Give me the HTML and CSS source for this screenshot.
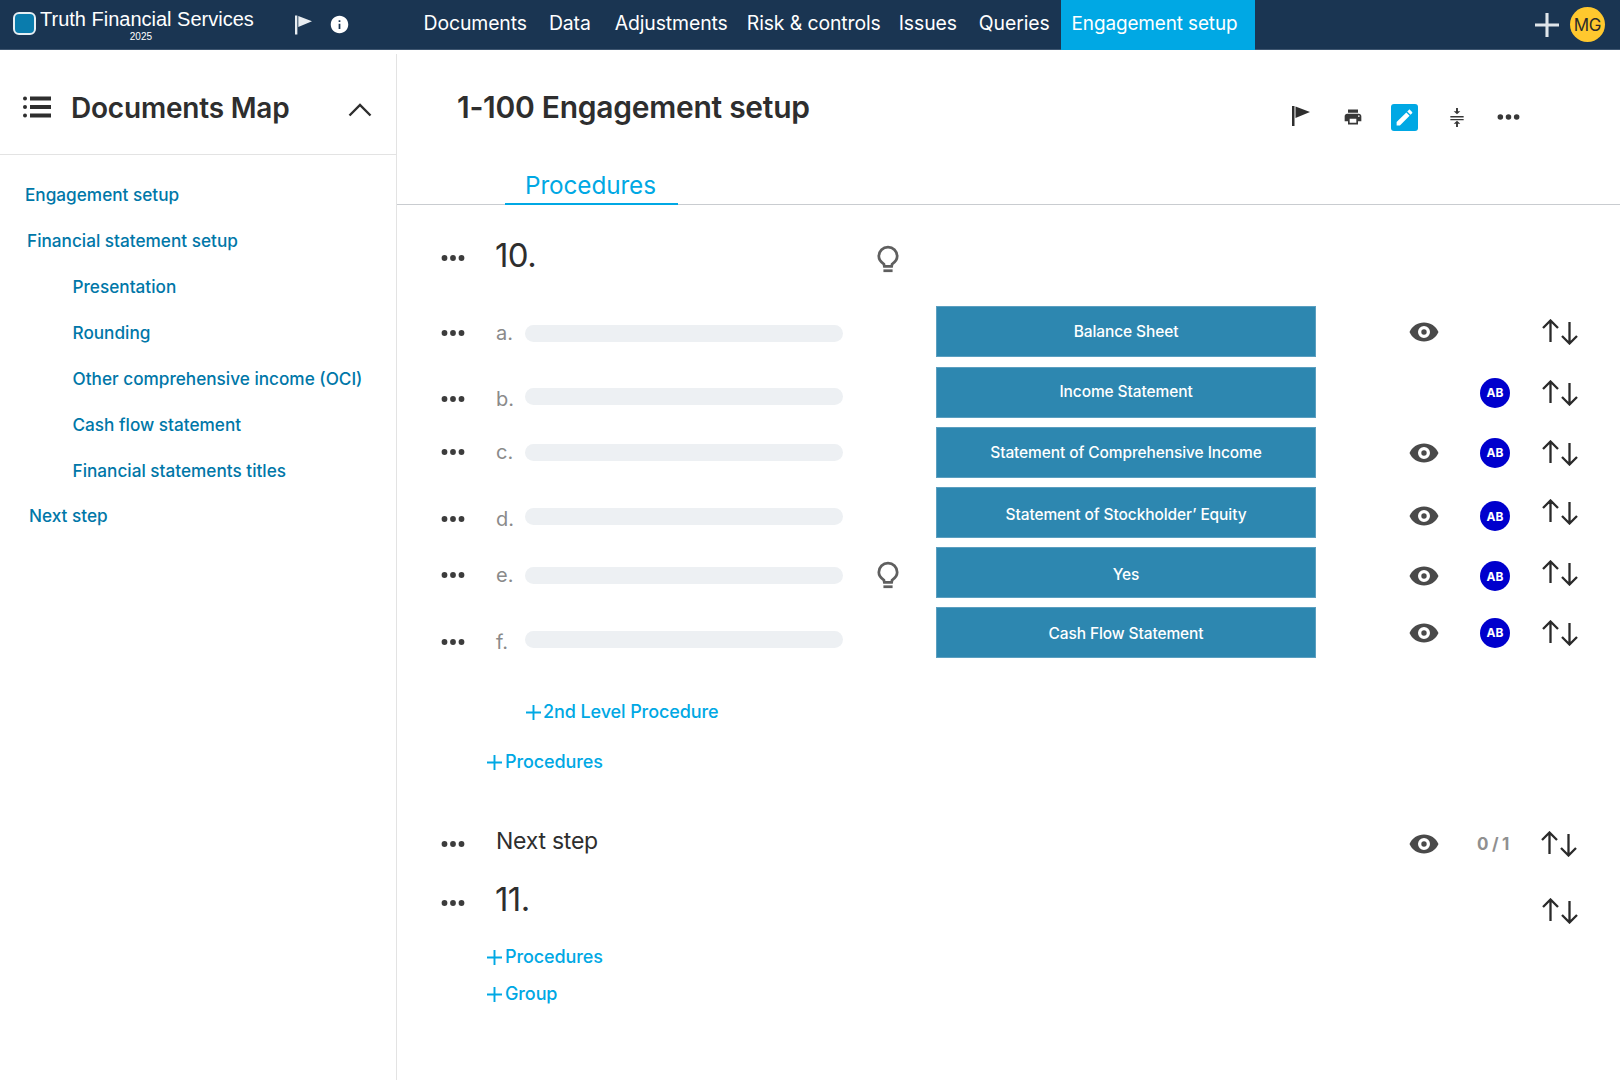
FILE: index.html
```html
<!DOCTYPE html>
<html lang="en">
<head>
<meta charset="utf-8">
<title>Engagement setup</title>
<link rel="stylesheet" href="styles.css">
</head>
<body>
<svg class="defs" width="0" height="0" aria-hidden="true">
  <symbol id="i-dots" viewBox="0 0 24 6"><circle cx="3.500" cy="3" r="2.900"/><circle cx="12" cy="3" r="2.900"/><circle cx="20.500" cy="3" r="2.900"/></symbol>
  <symbol id="i-eye" viewBox="0 0 30 20"><path fill-rule="evenodd" d="M15 .5C8.500.5 3 4.300.5 10 3 15.700 8.500 19.500 15 19.500S27 15.700 29.500 10C27 4.300 21.500.5 15 .5zM15 16A6 6 0 1 1 15 4a6 6 0 0 1 0 12zM15 7.300a2.700 2.700 0 1 0 0 5.400 2.700 2.700 0 0 0 0-5.400z"/></symbol>
  <symbol id="i-arrows" viewBox="0 0 36 26"><path d="M8.500 23V1.500M1 9l7.500-7.500L16 9M27.500 3v21.500M20 17l7.500 7.500L35 17" fill="none" stroke="currentColor" stroke-width="2.300"/></symbol>
  <symbol id="i-bulb" viewBox="0 0 24 30"><path d="M7.500 20.500C4.500 18.500 2 15.500 2 12a10 10 0 0 1 20 0c0 3.500-2.500 6.500-5.500 8.500l-.5 2.500H8z" fill="none" stroke="currentColor" stroke-width="3"/><path d="M7 27.800h10" stroke="currentColor" stroke-width="3"/></symbol>
  <symbol id="i-flag" viewBox="0 0 18 20"><path d="M0 0h2.500v20H0zM3.500 .5 18 6 3.500 12z"/></symbol>
  <symbol id="i-plus" viewBox="0 0 14 14"><path d="M7 0v14M0 7h14" fill="none" stroke="currentColor" stroke-width="1.800"/></symbol>
</svg>

<header class="topbar">
  <div class="brand">
    <span class="logo"></span>
    <div class="brand-text">
      <span class="brand-name">Truth Financial Services</span>
      <span class="brand-year">2025</span>
    </div>
  </div>
  <div class="top-icons">
    <svg class="top-flag"><use href="#i-flag"/></svg>
    <svg class="top-info" viewBox="0 0 24 24"><path d="M12 2C6.480 2 2 6.480 2 12s4.480 10 10 10 10-4.480 10-10S17.520 2 12 2zm1 15h-2v-6h2v6zm0-8h-2V7h2v2z"/></svg>
  </div>
  <nav class="nav">
    <a class="nav-item">Documents</a>
    <a class="nav-item">Data</a>
    <a class="nav-item nav-adj">Adjustments</a>
    <a class="nav-item nav-risk">Risk &amp; controls</a>
    <a class="nav-item nav-issues">Issues</a>
    <a class="nav-item">Queries</a>
    <a class="nav-item nav-active">Engagement setup</a>
  </nav>
  <div class="top-right">
    <svg class="top-plus"><use href="#i-plus"/></svg>
    <span class="user">MG</span>
  </div>
</header>

<div class="shell">
  <aside class="sidebar">
    <div class="side-head">
      <svg class="list-icon" viewBox="0 0 28 22"><circle cx="2" cy="2.500" r="2"/><circle cx="2" cy="11" r="2"/><circle cx="2" cy="19.500" r="2"/><path d="M7 .5h21v4H7zM7 9h21v4H7zM7 17.500h21v4H7z"/></svg>
      <h2 class="side-title">Documents Map</h2>
      <svg class="chev" viewBox="0 0 24 14"><path d="M1.500 12.500 12 2l10.500 10.500" fill="none" stroke="currentColor" stroke-width="2.400"/></svg>
    </div>
    <ul class="side-list">
      <li class="side-item l0">Engagement setup</li>
      <li class="side-item l0b">Financial statement setup</li>
      <li class="side-item l1">Presentation</li>
      <li class="side-item l1">Rounding</li>
      <li class="side-item l1">Other comprehensive income (OCI)</li>
      <li class="side-item l1">Cash flow statement</li>
      <li class="side-item l1">Financial statements titles</li>
      <li class="side-item l0c">Next step</li>
    </ul>
  </aside>

  <main class="main">
    <div class="page-head">
      <h1 class="page-title">1-100 Engagement setup</h1>
      <div class="tools">
        <span class="tool-cell"><svg class="tool-flag"><use href="#i-flag"/></svg></span>
        <span class="tool-cell"><svg class="tool" viewBox="0 0 24 24"><path d="M19 8H5c-1.660 0-3 1.340-3 3v6h4v4h12v-4h4v-6c0-1.660-1.340-3-3-3zm-3 11H8v-5h8v5zm3-7c-.55 0-1-.45-1-1s.45-1 1-1 1 .45 1 1-.45 1-1 1zm-1-9H6v4h12V3z"/></svg></span>
        <span class="tool-cell"><span class="edit-btn"><svg viewBox="0 0 24 24"><path d="M3 17.250V21h3.750L17.810 9.940l-3.750-3.750L3 17.250zM20.710 7.040c.39-.39.39-1.020 0-1.410l-2.340-2.340c-.39-.39-1.020-.39-1.410 0l-1.830 1.830 3.750 3.750 1.830-1.830z"/></svg></span></span>
        <span class="tool-cell"><svg class="tool-collapse" viewBox="0 0 14 20"><path d="M0 8.500h14v1.500H0zM0 11.500h14V13H0zM7 6.500l3.500-3H8V0H6v3.500H3.500zM7 13.500l3.500 3H8V20H6v-3.500H3.500z"/></svg></span>
        <span class="tool-cell"><svg class="tool-dots"><use href="#i-dots"/></svg></span>
      </div>
    </div>
    <div class="tabs"><span class="tab">Procedures</span></div>

    <div class="group-head">
      <svg class="dots"><use href="#i-dots"/></svg>
      <span class="group-num">10.</span>
      <svg class="bulb"><use href="#i-bulb"/></svg>
    </div>

    <div class="proc-grid">
      <div class="proc-left">
        <div class="proc r-a"><svg class="dots"><use href="#i-dots"/></svg><span class="letter">a.</span><span class="bar"></span></div>
        <div class="proc r-b"><svg class="dots"><use href="#i-dots"/></svg><span class="letter">b.</span><span class="bar"></span></div>
        <div class="proc r-c"><svg class="dots"><use href="#i-dots"/></svg><span class="letter">c.</span><span class="bar"></span></div>
        <div class="proc r-d"><svg class="dots"><use href="#i-dots"/></svg><span class="letter">d.</span><span class="bar"></span></div>
        <div class="proc r-e"><svg class="dots"><use href="#i-dots"/></svg><span class="letter">e.</span><span class="bar"></span><svg class="bulb"><use href="#i-bulb"/></svg></div>
        <div class="proc r-f"><svg class="dots"><use href="#i-dots"/></svg><span class="letter">f.</span><span class="bar"></span></div>
      </div>
      <div class="proc-right">
        <div class="res res-first"><span class="answer">Balance Sheet</span><svg class="eye"><use href="#i-eye"/></svg><span class="av-slot"></span><svg class="arrows"><use href="#i-arrows"/></svg></div>
        <div class="res res-up"><span class="answer">Income Statement</span><span class="eye"></span><span class="av-slot"><span class="av">AB</span></span><svg class="arrows"><use href="#i-arrows"/></svg></div>
        <div class="res"><span class="answer">Statement of Comprehensive Income</span><svg class="eye"><use href="#i-eye"/></svg><span class="av-slot"><span class="av">AB</span></span><svg class="arrows"><use href="#i-arrows"/></svg></div>
        <div class="res res-low res-d"><span class="answer">Statement of Stockholder’ Equity</span><svg class="eye"><use href="#i-eye"/></svg><span class="av-slot"><span class="av">AB</span></span><svg class="arrows"><use href="#i-arrows"/></svg></div>
        <div class="res res-low"><span class="answer">Yes</span><svg class="eye"><use href="#i-eye"/></svg><span class="av-slot"><span class="av">AB</span></span><svg class="arrows"><use href="#i-arrows"/></svg></div>
        <div class="res"><span class="answer answer-f">Cash Flow Statement</span><svg class="eye"><use href="#i-eye"/></svg><span class="av-slot"><span class="av">AB</span></span><svg class="arrows"><use href="#i-arrows"/></svg></div>
      </div>
    </div>

    <a class="add add-2nd"><svg class="plus"><use href="#i-plus"/></svg>2nd Level Procedure</a>
    <a class="add add-proc"><svg class="plus"><use href="#i-plus"/></svg>Procedures</a>

    <div class="next-row">
      <svg class="dots"><use href="#i-dots"/></svg>
      <span class="next-label">Next step</span>
      <svg class="eye"><use href="#i-eye"/></svg>
      <span class="count">0 / 1</span>
      <svg class="arrows"><use href="#i-arrows"/></svg>
    </div>
    <div class="group-11">
      <svg class="dots"><use href="#i-dots"/></svg>
      <span class="group-num">11.</span>
      <svg class="arrows"><use href="#i-arrows"/></svg>
    </div>
    <a class="add add-proc2"><svg class="plus"><use href="#i-plus"/></svg>Procedures</a>
    <a class="add add-group"><svg class="plus"><use href="#i-plus"/></svg>Group</a>
  </main>
</div>
</body>
</html>
```
FILE: styles.css
```css
* { box-sizing: border-box; }
html, body { margin: 0; height: 100%; }
body {
  width: 1620px;
  height: 1080px;
  overflow: hidden;
  background: #fff;
  color: #2e2e2e;
  font-family: Inter, "Liberation Sans", sans-serif;
  display: flex;
  flex-direction: column;
}
.defs { position: absolute; }
h1, h2, ul { margin: 0; padding: 0; }
li { list-style: none; }

.topbar {
  height: 50px;
  flex: none;
  display: flex;
  align-items: stretch;
  background: #1a3552;
  border-bottom: 1px solid #3f5670;
  color: #fff;
}
.brand { width: 286px; display: flex; padding-left: 13px; align-items: flex-start; }
.logo {
  width: 23px; height: 23px; margin-top: 12px;
  background: #0a7cad;
  border: 2px solid #e6eef3;
  border-radius: 6px;
  flex: none;
}
.brand-text { display: flex; flex-direction: column; align-items: center; margin-left: 4px; }
.brand-name { font-size: 20px; line-height: 24px; margin-top: 7px; font-family: "Liberation Sans", sans-serif; white-space: nowrap; }
.brand-year { font-size: 10px; line-height: 11px; margin-right: 12px; font-family: "Liberation Sans", sans-serif; }
.top-icons { width: 126.500px; display: flex; align-items: center; gap: 17px; fill: #fff; padding-left: 9px; }
.top-flag { width: 17px; height: 20px; fill: #e8edf1; }
.top-info { width: 21px; height: 21px; }
.nav { display: flex; align-items: stretch; flex: 1; }
.nav-item { font-size: 19.400px; line-height: 47px; padding: 0 11px; color: #fff; letter-spacing: -.1px; white-space: nowrap; }
.nav-adj { margin-left: 2px; }
.nav-risk { margin-left: -3px; }
.nav-issues { margin-left: -4px; }
.nav-active { background: #00a8e4; font-size: 18.900px; padding: 0 18px 0 11px; margin-bottom: -1px; }
.top-right { display: flex; align-items: center; gap: 11px; padding-right: 15px; }
.top-plus { width: 24px; height: 24px; color: #dfe5ea; }
.user {
  width: 35px; height: 35px; border-radius: 50%;
  background: #ffc82e; color: #2b2b2b;
  font-size: 17px; letter-spacing: -.3px; display: flex; align-items: center; justify-content: center;
}

.shell { flex: 1; display: flex; min-height: 0; }
.sidebar { width: 397px; flex: none; margin-top: 4px; border-right: 1px solid #e3e3e3; }
.side-head {
  height: 101px;
  display: flex; align-items: center;
  padding: 7px 24px 0 23px;
  border-bottom: 1px solid #e3e3e3;
}
.list-icon { width: 28px; height: 22px; fill: #2e2e2e; flex: none; margin-bottom: 2px; }
.side-title { font-size: 28px; font-weight: 600; margin-left: 20px; flex: 1; letter-spacing: -.2px; }
.chev { width: 24px; height: 14px; color: #2e2e2e; margin-top: 4px; }
.side-list { padding-top: 28px; color: #0077a8; }
.side-item { font-size: 17.200px; font-weight: 500; line-height: 24px; margin-bottom: 22px; }
.l0 { padding-left: 25px; }
.l0b { padding-left: 27px; }
.l1 { padding-left: 72.500px; }
.l0c { padding-left: 29px; margin-top: -1px; }

.main { flex: 1; min-width: 0; }
.page-head { height: 100px; position: relative; padding-left: 60px; }
.page-title { font-size: 30px; font-weight: 600; padding-top: 37px; line-height: 40px; letter-spacing: -.27px; }
.tools { position: absolute; left: 877.500px; top: 53px; display: flex; align-items: center; height: 28px; }
.tool-cell { width: 52px; display: flex; align-items: center; justify-content: center; }
.tool-flag { width: 18px; height: 20px; fill: #2e2e2e; margin-top: -2px; }
.tool { width: 20px; height: 20px; fill: #383838; }
.edit-btn { width: 27px; height: 27px; border-radius: 3px; background: #00a8e4; display: flex; align-items: center; justify-content: center; fill: #fff; }
.edit-btn svg { width: 21px; height: 21px; }
.tool-collapse { width: 14px; height: 19px; fill: #383838; }
.tool-dots { width: 23px; height: 6px; fill: #383838; }

.tabs { height: 55px; border-bottom: 1px solid #c9ccd0; padding-left: 108px; display: flex; }
.tab {
  width: 173px; height: 55px; padding-left: 20px;
  font-size: 24.300px; line-height: 70px; color: #00a8e4;
  border-bottom: 2px solid #00a8e4;
  margin-bottom: -1px;
  letter-spacing: -.1px;
}

.dots { width: 24px; height: 6px; fill: #3c3c3c; flex: none; }
.group-head { height: 72px; display: flex; align-items: center; padding: 0 0 0 44px; margin-top: 17px; }
.group-num { font-size: 33px; letter-spacing: -.6px; margin-left: 30px; line-height: 40px; position: relative; top: -3px; }
.group-head .bulb { margin-left: 341px; margin-top: 2px; }
.bulb { width: 22px; height: 28px; color: #5f5f5f; flex: none; }

.proc-grid { display: flex; height: 353px; margin-top: 12px; }
.proc-left { width: 539px; padding-left: 44px; }
.proc { display: flex; align-items: center; height: 24px; margin-bottom: 42px; }
.r-a { margin-top: 15px; }
.r-b { margin-bottom: 29px; }
.r-c { margin-bottom: 43px; }
.r-d { margin-bottom: 32px; }
.r-e { margin-bottom: 43px; }
.letter { width: 29px; margin-left: 31px; font-size: 20px; color: #8a8a8a; line-height: 24px; }
.bar { width: 318px; height: 17px; background: #edf0f3; border-radius: 9px; }
.r-b .bar { margin-top: -5px; }
.r-d .bar { margin-top: -6px; }
.r-f .bar { margin-top: -6px; }
.proc .bulb { margin-left: 34px; }

.proc-right { flex: 1; display: flex; flex-direction: column; gap: 9px; }
.res { display: flex; align-items: center; height: 51px; }
.res-first { margin-bottom: 1px; }
.answer {
  width: 380px; height: 51px; flex: none;
  background: #2d87b0;
  border: 1px solid #5b9fc0;
  color: #fff;
  font-size: 15.500px; font-weight: 500;
  display: flex; align-items: center; justify-content: center;
  letter-spacing: -.1px;
}
.res-up .answer { padding-bottom: 3px; }
.res-low .answer { padding-top: 3px; }
.answer-f { padding-top: 2px; }
.res-low .eye, .res-low .av-slot { margin-top: 7px; }
.res-d .arrows { margin-top: -2px; }
.eye { width: 30px; height: 20px; fill: #4a4a4a; flex: none; margin-left: 93px; }
.av-slot { width: 30px; height: 30px; margin-left: 41px; flex: none; }
.av {
  display: flex; width: 30px; height: 30px; border-radius: 50%;
  background: #0000cd; color: #fff;
  font-size: 12px; font-weight: 700;
  align-items: center; justify-content: center;
}
.arrows { width: 36px; height: 26px; color: #2a2a2a; margin-left: 32px; flex: none; }

.add {
  display: flex; align-items: center;
  font-size: 18px; font-weight: 500; line-height: 24px;
  color: #00a8e4;
  letter-spacing: -.1px;
}
.plus { width: 15px; height: 15px; margin-right: 3px; flex: none; }
.add-2nd { margin-top: 41px; padding-left: 129px; }
.add-2nd .plus { margin-right: 2px; }
.add-proc { margin-top: 26px; padding-left: 90px; }

.next-row { display: flex; align-items: center; margin-top: 55px; height: 30px; padding-left: 44px; }
.next-label { font-size: 23px; margin-left: 31px; width: 913px; flex: none; letter-spacing: -.25px; margin-top: -6px; }
.next-row .eye { margin-left: 0; }
.count { width: 30px; margin-left: 38px; font-size: 17px; font-weight: 700; color: #909090; white-space: nowrap; letter-spacing: -.3px; }
.next-row .arrows { margin-left: 34px; }
.group-11 { display: flex; align-items: center; margin-top: 26px; height: 36px; padding-left: 44px; }
.group-11 .group-num { width: 1047px; flex: none; top: -4px; }
.group-11 .arrows { margin-left: 0; margin-top: 15px; }
.add-proc2 { margin-top: 24px; padding-left: 90px; }
.add-group { margin-top: 13px; padding-left: 90px; }
```
